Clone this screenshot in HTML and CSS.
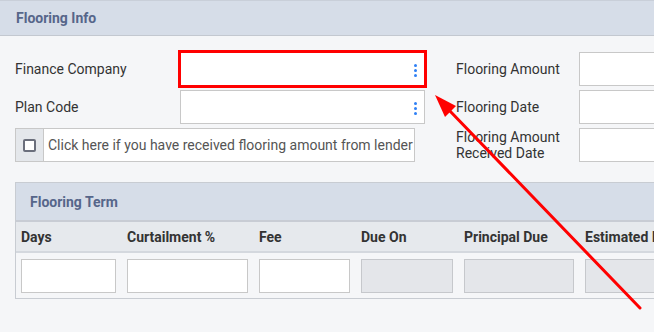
FILE: index.html
```html
<!DOCTYPE html>
<html>
<head>
<meta charset="utf-8">
<link rel="stylesheet" href="styles.css">
</head>
<body>
<div class="page">
  <div class="section-header">Flooring Info</div>
  <div class="form">
    <label class="lbl">Finance Company</label>
    <div class="input select highlight"><span class="dots"><i></i><i></i><i></i></span></div>
    <label class="lbl right">Flooring Amount</label>
    <div class="input"></div>

    <label class="lbl">Plan Code</label>
    <div class="input select"><span class="dots"><i></i><i></i><i></i></span></div>
    <label class="lbl right">Flooring Date</label>
    <div class="input"></div>

    <div class="check-group">
      <span class="addon"><span class="box"></span></span>
      <span class="check-text">Click here if you have received flooring amount from lender</span>
    </div>
    <label class="lbl right two-line">Flooring Amount Received Date</label>
    <div class="input"></div>
  </div>

  <div class="panel">
    <div class="panel-header">Flooring Term</div>
    <div class="grid head">
      <span>Days</span>
      <span>Curtailment %</span>
      <span>Fee</span>
      <span>Due On</span>
      <span>Principal Due</span>
      <span>Estimated Interest</span>
    </div>
    <div class="grid body">
      <div class="input"></div>
      <div class="input"></div>
      <div class="input"></div>
      <div class="input disabled"></div>
      <div class="input disabled"></div>
      <div class="input disabled"></div>
    </div>
  </div>
</div>
<svg class="arrow" width="654" height="332" viewBox="0 0 654 332">
  <line x1="640" y1="308" x2="448" y2="109" stroke="#ff0000" stroke-width="3" stroke-linecap="round"/>
  <polygon points="435,95 456,106 445,117" fill="#ff0000"/>
</svg>
</body>
</html>
```

FILE: styles.css
```css
html, body {
  margin: 0;
  padding: 0;
}
body {
  background: #f5f6f8;
  font-family: Roboto, "Liberation Sans", Arial, sans-serif;
  width: 654px;
  height: 332px;
  overflow: hidden;
  position: relative;
}
.page {
  width: 780px;
}
.section-header {
  height: 36px;
  box-sizing: border-box;
  background: #d6dde8;
  border-top: 1px solid #c9cfd9;
  border-bottom: 1px solid #c3c8d0;
  padding-left: 16px;
  display: flex;
  align-items: center;
  font-size: 14px;
  font-weight: 700;
  color: #56668a;
}
.form {
  display: grid;
  grid-template-columns: 164px 247px 153px 200px;
  grid-auto-rows: 34px;
  row-gap: 4px;
  padding: 16px 0 0 15px;
}
.lbl {
  display: flex;
  align-items: center;
  font-size: 14px;
  color: #333;
}
.lbl.right {
  padding-left: 30px;
}
.lbl.two-line {
  line-height: 16px;
}
.input {
  box-sizing: border-box;
  background: #fff;
  border: 1px solid #c8c8c8;
  height: 34px;
  position: relative;
}
.form .input.select {
  margin-left: 1px;
  margin-right: 1px;
}
.input.highlight {
  border: 1px solid #ff0000;
  box-shadow: 0 0 0 2px #ff0000;
}
.dots {
  position: absolute;
  right: 7px;
  top: 11px;
  display: flex;
  flex-direction: column;
  gap: 2px;
}
.dots i {
  display: block;
  width: 3px;
  height: 3px;
  border-radius: 50%;
  background: #2f80f5;
}
.check-group {
  grid-column: 1 / 3;
  width: 400px;
  display: flex;
  box-sizing: border-box;
  border: 1px solid #c8c8c8;
  background: #fff;
}
.addon {
  width: 27px;
  background: #e4e7eb;
  border-right: 1px solid #c8c8c8;
  display: flex;
  align-items: center;
  justify-content: center;
}
.box {
  width: 9px;
  height: 9px;
  border: 2px solid #6b6f7c;
  border-radius: 2px;
  background: #fff;
}
.check-text {
  display: flex;
  align-items: center;
  padding-left: 4px;
  font-size: 14px;
  color: #555;
  white-space: nowrap;
}
.panel {
  margin: 20px 0 0 15px;
  border: 1px solid #c8ccd2;
  border-right: none;
}
.panel-header {
  height: 37px;
  background: #d6dde8;
  border-bottom: 2px solid #c8ccd4;
  padding-left: 14px;
  display: flex;
  align-items: center;
  font-size: 14px;
  font-weight: 700;
  color: #56668a;
}
.grid {
  display: grid;
  grid-template-columns: 95px 121px 91px 92px 110px 140px;
  column-gap: 11px;
  padding: 0 5px;
}
.grid.head {
  height: 29px;
  background: #e6e9ed;
  border-bottom: 2px solid #d4d8de;
  align-items: center;
  font-size: 14px;
  font-weight: 700;
  color: #333;
  white-space: nowrap;
}
.grid.body {
  padding-top: 6px;
  padding-bottom: 5px;
}
.input.disabled {
  background: #e4e6ea;
  border-color: #c6c8cc;
}
.arrow {
  position: absolute;
  left: 0;
  top: 0;
  pointer-events: none;
}
```
